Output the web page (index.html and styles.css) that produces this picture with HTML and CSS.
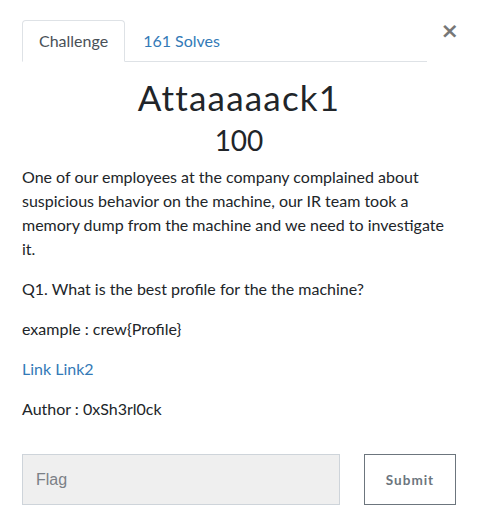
FILE: index.html
```html
<!DOCTYPE html>
<html>
<head>
<meta charset="utf-8">
<link rel="stylesheet" href="styles.css">
</head>
<body>
<div class="modal">
  <div class="head">
    <ul class="tabs">
      <li class="tab active">Challenge</li>
      <li class="tab link">161 Solves</li>
    </ul>
    <span class="close">&times;</span>
  </div>
  <h2 class="title">Attaaaaack1</h2>
  <h3 class="points">100</h3>
  <div class="desc">
    <p>One of our employees at the company complained about suspicious behavior on the machine, our IR team took a memory dump from the machine and we need to investigate it.</p>
    <p>Q1. What is the best profile for the the machine?</p>
    <p>example : crew{Profile}</p>
    <p><a class="lnk">Link</a> <a class="lnk">Link2</a></p>
    <p>Author : 0xSh3rl0ck</p>
  </div>
  <div class="form">
    <input class="flag" type="text" placeholder="Flag">
    <button class="submit">Submit</button>
  </div>
</div>
</body>
</html>
```
FILE: styles.css
```css
html, body { margin: 0; padding: 0; background: #fff; }
body { font-family: "Lato", "Liberation Sans", sans-serif; color: #212529; }
.modal { padding: 20px 26px 0 22px; }
.head { display: flex; align-items: flex-start; }
.tabs {
  list-style: none; margin: 0; padding: 0; display: flex; flex: 1;
  border-bottom: 1px solid #dee2e6; margin-right: 14px;
}
.tab {
  font-size: 16px; line-height: 24px; padding: 8px 16px; margin-bottom: -1px;
  border: 1px solid transparent; border-radius: 4px 4px 0 0;
}
.tab.active { color: #495057; border-color: #dee2e6 #dee2e6 #fff; background: #fff; }
.tab.link { color: #337ab7; padding-left: 17px; }
.close {
  font-family: "DejaVu Sans", sans-serif; font-weight: bold; font-size: 22px; line-height: 20px;
  color: #777; margin-top: 1px; margin-right: -3px;
}
.title {
  font-family: "Lato", sans-serif; font-weight: 400; font-size: 35px; letter-spacing: 1.2px;
  text-align: center; margin: 15px 0 0; line-height: 40px;
}
.points {
  font-weight: 400; font-size: 28px; text-align: center; margin: 5px 0 0; line-height: 36px;
}
.desc { font-size: 16px; line-height: 24px; margin-top: 7px; }
.desc p { margin: 0 0 16px; }
.desc p:last-child { margin-bottom: 0; }
.lnk { color: #337ab7; }
.form { display: flex; margin-top: 33px; }
.flag {
  width: 318px; height: 51px; box-sizing: border-box; background: #efefef;
  border: 1px solid #ced4da; padding: 0 13px; font-family: "Liberation Sans", sans-serif;
  font-size: 16px; color: #495057; margin: 0;
}
.flag::placeholder { color: #7b8086; }
.submit {
  margin-left: 24px; width: 92px; height: 51px; background: #fff; border: 1px solid #6c757d;
  color: #6c757d; font-family: "Lato", sans-serif; font-weight: bold; font-size: 13.5px;
  letter-spacing: 1px; padding: 0;
}
```
